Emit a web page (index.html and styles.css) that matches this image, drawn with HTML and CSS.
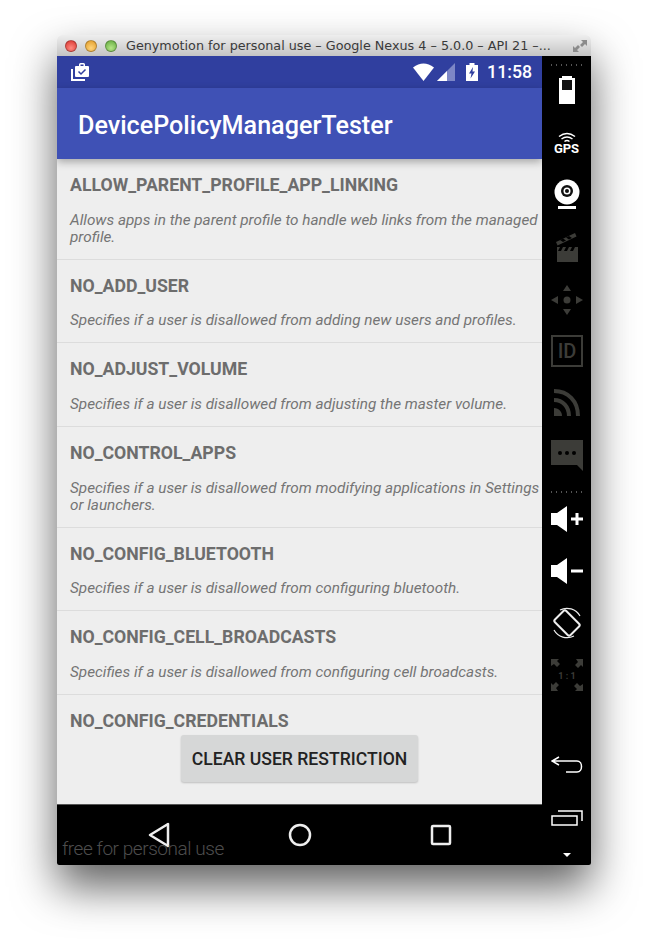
FILE: index.html
```html
<!DOCTYPE html>
<html lang="en">
<head>
  <meta charset="UTF-8">
  <meta name="viewport" content="width=device-width, initial-scale=1.0">
  <title>DevicePolicyManagerTester</title>
  <link rel="stylesheet" href="styles.css">
</head>
<body>
  <div class="window">
    <div class="titlebar">
      <div class="lights">
        <span class="light red"></span>
        <span class="light amber"></span>
        <span class="light green"></span>
      </div>
      <div class="window-title">Genymotion for personal use – Google Nexus 4 – 5.0.0 – API 21 –...</div>
      <svg class="expand" width="16" height="14" viewBox="0 0 16 14" fill="#8b8b8b">
        <path d="M9 1h6v6l-2-2-3 3-2-2 3-3z"/>
        <path d="M7 13H1V7l2 2 3-3 2 2-3 3z"/>
      </svg>
    </div>

    <div class="device">
      <div class="phone">
        <div class="statusbar">
          <svg class="work-icon" width="18" height="18" viewBox="0 0 18 18">
            <path fill="#fff" d="M0 6h2v10h12v2H0z"/>
            <path fill="#fff" d="M5 3h3V1.5A1.5 1.5 0 0 1 9.5 0h3A1.5 1.5 0 0 1 14 1.500V3h3a1 1 0 0 1 1 1v9a1 1 0 0 1-1 1H5a1 1 0 0 1-1-1V4a1 1 0 0 1 1-1zm4.500-1.500V3h3V1.500z"/>
            <path fill="none" stroke="#303f9f" stroke-width="1.500" d="M7.500 8.500l2.500 2.500 4.500-4.500"/>
          </svg>
          <div class="status-right">
            <svg width="21" height="18" viewBox="0 0 21 18"><path fill="#fff" d="M0 4.500Q10.500-3.500 21 4.500L10.500 18z"/></svg>
            <svg width="18" height="18" viewBox="0 0 18 18">
              <path fill="#7d87c6" d="M18 0v18H0z"/>
              <path fill="#fff" d="M10 8v10H0z"/>
            </svg>
            <svg class="charge" width="12" height="18" viewBox="0 0 12 18">
              <path fill="#fff" d="M3.500 0h5v2H12v16H0V2h3.500z"/>
              <path fill="#303f9f" d="M7 4 3 10.500h2.500L4.500 15.500 9 8.500H6.500z"/>
            </svg>
            <span class="clock">11:58</span>
          </div>
        </div>

        <div class="appbar">DevicePolicyManagerTester</div>

        <div class="restrictions">
          <div class="restriction">
            <div class="restriction-name">ALLOW_PARENT_PROFILE_APP_LINKING</div>
            <div class="restriction-desc">Allows apps in the parent profile to handle web links from the managed profile.</div>
          </div>
          <div class="restriction">
            <div class="restriction-name">NO_ADD_USER</div>
            <div class="restriction-desc">Specifies if a user is disallowed from adding new users and profiles.</div>
          </div>
          <div class="restriction">
            <div class="restriction-name">NO_ADJUST_VOLUME</div>
            <div class="restriction-desc">Specifies if a user is disallowed from adjusting the master volume.</div>
          </div>
          <div class="restriction">
            <div class="restriction-name">NO_CONTROL_APPS</div>
            <div class="restriction-desc">Specifies if a user is disallowed from modifying applications in Settings or launchers.</div>
          </div>
          <div class="restriction">
            <div class="restriction-name">NO_CONFIG_BLUETOOTH</div>
            <div class="restriction-desc">Specifies if a user is disallowed from configuring bluetooth.</div>
          </div>
          <div class="restriction">
            <div class="restriction-name">NO_CONFIG_CELL_BROADCASTS</div>
            <div class="restriction-desc">Specifies if a user is disallowed from configuring cell broadcasts.</div>
          </div>
          <div class="restriction last">
            <div class="restriction-name">NO_CONFIG_CREDENTIALS</div>
          </div>
        </div>

        <div class="footer">
          <button class="clear-btn" type="button">CLEAR USER RESTRICTION</button>
        </div>

        <div class="navbar">
          <svg width="24" height="26" viewBox="0 0 24 26" fill="none" stroke="#eee" stroke-width="2.500" stroke-linejoin="round">
            <path d="M21 2v22L3 13z"/>
          </svg>
          <svg width="24" height="24" viewBox="0 0 24 24" fill="none" stroke="#eee" stroke-width="2.500">
            <circle cx="12" cy="12" r="10"/>
          </svg>
          <svg width="24" height="24" viewBox="0 0 24 24" fill="none" stroke="#eee" stroke-width="2.500" stroke-linejoin="round">
            <rect x="3" y="3" width="18" height="18" rx="1"/>
          </svg>
          <span class="watermark">free for personal use</span>
        </div>
      </div>

      <div class="sidebar">
        <div class="dots"><span></span></div>
        <div class="slot">
          <svg width="16" height="28" viewBox="0 0 16 28">
            <path fill="#fff" d="M3 0h10v2h3v26H0V2h3z"/>
            <rect x="3" y="4" width="10" height="10" fill="#111"/>
          </svg>
        </div>
        <div class="slot gps">
          <svg width="18" height="11" viewBox="0 0 18 11" fill="none" stroke="#fff" stroke-width="1.500">
            <path d="M1 4.500q8-6 16 0M3.500 7q5.500-4 11 0"/>
            <path d="M6.500 9.500q2.500-2 5 0"/>
          </svg>
          <span class="gps-label">GPS</span>
        </div>
        <div class="slot">
          <svg width="26" height="30" viewBox="0 0 26 30">
            <circle cx="13" cy="13" r="12.500" fill="#fff"/>
            <circle cx="13" cy="12" r="6" fill="#111"/>
            <circle cx="13" cy="12" r="3.500" fill="#fff"/>
            <circle cx="13" cy="12" r="2" fill="#111"/>
            <rect x="4" y="27" width="18" height="3" fill="#fff"/>
          </svg>
        </div>
        <div class="slot nudge">
          <svg width="24" height="29" viewBox="0 0 24 29" fill="#3c3c38">
            <rect x="2" y="14" width="21" height="15"/>
            <path d="M1 9 20 0l1.500 3.500-19 9z"/>
            <path fill="#000" d="M5 14h3l-2 4H3zM11 14h3l-2 4H9zM17 14h3l-2 4h-3zM5 7l3 2 3-1.500-3-2zM11 4.500l3 2 3-1.500-3-2z"/>
          </svg>
        </div>
        <div class="slot nudge-more">
          <svg width="32" height="30" viewBox="0 0 32 30" fill="#3c3c38">
            <circle cx="16" cy="15" r="3.500"/>
            <path d="M16 0l4 6h-8zM16 30l-4-6h8zM0 15l7-4v8zM32 15l-7 4v-8z"/>
          </svg>
        </div>
        <div class="slot nudge">
          <svg width="32" height="32" viewBox="0 0 32 32">
            <rect x="1" y="1" width="30" height="30" fill="none" stroke="#3c3c38" stroke-width="2"/>
            <text class="id-text" x="16" y="23" text-anchor="middle">ID</text>
          </svg>
        </div>
        <div class="slot">
          <svg width="26" height="27" viewBox="0 0 26 27" fill="none" stroke="#3c3c38" stroke-width="4">
            <path d="M0 2c14 0 24 10 24 25M0 11c9 0 15 7 15 16"/>
            <path fill="#3c3c38" stroke="none" d="M0 19c5 0 8 4 8 8H0z"/>
          </svg>
        </div>
        <div class="slot nudge">
          <svg width="32" height="31" viewBox="0 0 32 31">
            <path fill="#3c3c38" d="M0 0h32v31l-6-6H0z"/>
            <circle cx="9" cy="13" r="2" fill="#000"/>
            <circle cx="16" cy="13" r="2" fill="#000"/>
            <circle cx="23" cy="13" r="2" fill="#000"/>
          </svg>
        </div>
        <div class="dots dots-low"><span></span></div>
        <div class="slot">
          <svg width="32" height="26" viewBox="0 0 32 26" fill="#fff">
            <path d="M0 7h6l10-7v26L6 19H0z"/>
            <path d="M20 11.500h4.500V7h3v4.500H32v3h-4.500V19h-3v-4.500H20z"/>
          </svg>
        </div>
        <div class="slot">
          <svg width="32" height="26" viewBox="0 0 32 26" fill="#fff">
            <path d="M0 7h6l10-7v26L6 19H0z"/>
            <rect x="20" y="11.500" width="12" height="3"/>
          </svg>
        </div>
        <div class="slot">
          <svg width="32" height="32" viewBox="0 0 32 32" fill="none" stroke="#eee">
            <rect x="8" y="5" width="16" height="22" rx="2" stroke-width="2" transform="rotate(-45 16 16)"/>
            <path d="M9 3a15 15 0 0 1 20 6M23 29A15 15 0 0 1 3 23" stroke-width="1.200"/>
          </svg>
        </div>
        <div class="slot">
          <svg width="32" height="32" viewBox="0 0 32 32" fill="#3c3c38">
            <path d="M0 0h8L6 2l3 3-3 3-3-3-3 2zM32 0v8l-2-2-3 3-3-3 3-3-2-3zM0 32v-8l2 2 3-3 3 3-3 3 2 3zM32 32h-8l2-2-3-3 3-3 3 3 3-2z"/>
            <text class="ratio-text" x="16" y="20" text-anchor="middle">1 : 1</text>
          </svg>
        </div>
        <div class="slot back">
          <svg width="32" height="17" viewBox="0 0 32 17" fill="none" stroke="#fff" stroke-width="1.500">
            <path d="M8 1 1 5l7 4M1 5h25c6 0 6 11 0 11H15"/>
          </svg>
        </div>
        <div class="slot recents">
          <svg width="32" height="16" viewBox="0 0 32 16" fill="none" stroke="#fff" stroke-width="1.500">
            <rect x="1" y="6" width="25" height="9"/>
            <path d="M7 1h24v10"/>
          </svg>
        </div>
        <div class="caret"></div>
      </div>
    </div>
  </div>
</body>
</html>
```

FILE: styles.css
```css
* {
  margin: 0;
  padding: 0;
  box-sizing: border-box;
}

body {
  background: white;
  font-family: Roboto, Arial, sans-serif;
  padding: 35px 57px 79px;
}

.window {
  height: 830px;
  border-radius: 5px 5px 2px 2px;
  box-shadow: 0 22px 44px rgba(0, 0, 0, 0.62);
  display: flex;
  flex-direction: column;
  overflow: hidden;
}

.titlebar {
  height: 21px;
  flex-shrink: 0;
  background: linear-gradient(#eeeeee, #c4c4c4);
  display: flex;
  align-items: center;
  padding-left: 8px;
}

.lights {
  display: flex;
  gap: 8px;
}

.light {
  width: 12px;
  height: 12px;
  border-radius: 50%;
  border: 1px solid rgba(0, 0, 0, 0.25);
}

.red { background: radial-gradient(circle at 50% 70%, #ff8a80, #d8332d); }
.amber { background: radial-gradient(circle at 50% 70%, #ffd47a, #e09a25); }
.green { background: radial-gradient(circle at 50% 70%, #b5e687, #5fa83c); }

.window-title {
  margin-left: 9px;
  flex: 1;
  font-family: "DejaVu Sans", sans-serif;
  font-size: 12.750px;
  color: #3a3a3a;
  white-space: nowrap;
}

.expand {
  margin-right: 3px;
}

.device {
  flex: 1;
  display: flex;
  min-height: 0;
}

.phone {
  width: 485px;
  display: flex;
  flex-direction: column;
  background: #eeeeee;
}

.statusbar {
  height: 32px;
  flex-shrink: 0;
  background: #303f9f;
  display: flex;
  align-items: center;
  justify-content: space-between;
  padding: 0 10px 0 14px;
}

.status-right {
  display: flex;
  align-items: center;
  gap: 3px;
}

.charge {
  margin: 0 6px 0 8px;
}

.clock {
  color: #fff;
  font-size: 17.700px;
  font-weight: 500;
}

.appbar {
  height: 71px;
  flex-shrink: 0;
  background: #3f51b5;
  color: #fff;
  font-size: 25.150px;
  font-weight: 500;
  display: flex;
  align-items: center;
  padding: 4px 0 0 21px;
  box-shadow: 0 3px 8px rgba(0, 0, 0, 0.3);
  position: relative;
}

.restrictions {
  flex: 1;
  min-height: 0;
  overflow: hidden;
}

.restriction {
  padding: 13px 0 13.200px 13px;
  border-bottom: 1px solid #dcdcdc;
}

.restriction.last {
  border-bottom: none;
}

.restriction-name {
  color: #6d6d6d;
  font-size: 17.700px;
  font-weight: 700;
  line-height: 26px;
  margin-bottom: 13.500px;
}

.restriction-desc {
  color: #757575;
  font-size: 15.300px;
  font-style: italic;
  line-height: 17px;
}

.footer {
  height: 74px;
  flex-shrink: 0;
  display: flex;
  justify-content: center;
  padding-top: 5px;
}

.clear-btn {
  width: 237px;
  height: 47px;
  border: none;
  border-radius: 3px;
  background: #d6d7d7;
  box-shadow: 0 1px 2px rgba(0, 0, 0, 0.2);
  color: #222;
  font-family: Roboto, Arial, sans-serif;
  font-size: 17.600px;
  font-weight: 500;
}

.navbar {
  height: 61px;
  flex-shrink: 0;
  background: #000;
  border-top: 1px solid #555;
  display: flex;
  align-items: center;
  padding: 0 89px 0 90px;
  justify-content: space-between;
  position: relative;
}

.watermark {
  position: absolute;
  left: 5px;
  bottom: 5px;
  color: #4d4d4d;
  font-size: 19px;
  font-weight: 300;
  letter-spacing: -0.450px;
}

.sidebar {
  width: 49px;
  background: #000;
  display: flex;
  flex-direction: column;
  align-items: center;
}

.slot {
  height: 52px;
  width: 100%;
  flex-shrink: 0;
  display: flex;
  flex-direction: column;
  align-items: center;
  justify-content: center;
}

.dots {
  height: 2px;
  margin: 8px 0 -2px;
  flex-shrink: 0;
  display: flex;
  align-items: flex-start;
}

.dots span {
  width: 31px;
  height: 2px;
  background: repeating-linear-gradient(90deg, #555 0 1px, transparent 1px 5px);
}

.dots-low {
  height: 13px;
  margin: 0;
  align-items: flex-end;
}

.gps {
  padding-top: 2px;
}

.gps-label {
  color: #fff;
  font-size: 13px;
  font-weight: 700;
  line-height: 12px;
}

.nudge svg {
  margin-top: 2px;
}

.nudge-more svg {
  margin-top: 4px;
}

.id-text {
  fill: #3c3c38;
  font-family: Roboto, Arial, sans-serif;
  font-size: 20px;
  font-weight: 500;
}

.ratio-text {
  fill: #3c3c38;
  font-family: Roboto, Arial, sans-serif;
  font-size: 9px;
  font-weight: 700;
}

.back {
  margin-top: auto;
}

.recents {
  padding-top: 4px;
}

.caret {
  margin: 11px 0 8px;
  width: 0;
  height: 0;
  border-left: 4px solid transparent;
  border-right: 4px solid transparent;
  border-top: 4px solid #fff;
}
```
